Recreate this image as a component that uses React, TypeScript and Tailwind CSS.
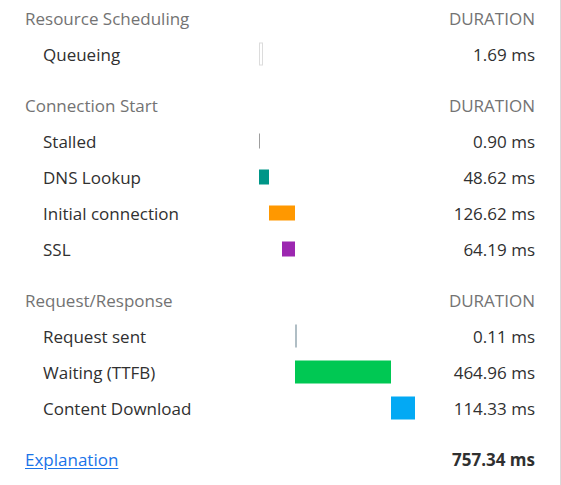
import React from "react";

const TOTAL = 757.34;
const TRACK = 156;

type Bar = {
  start: number;
  dur: number;
  kind: "queue" | "stall" | "sent" | "fill";
  color?: string;
  tall?: boolean;
};

type Row = { label: string; value: string; bar: Bar };
type Section = { title: string; rows: Row[] };

const sections: Section[] = [
  {
    title: "Resource Scheduling",
    rows: [{ label: "Queueing", value: "1.69 ms", bar: { start: 0, dur: 1.69, kind: "queue" } }],
  },
  {
    title: "Connection Start",
    rows: [
      { label: "Stalled", value: "0.90 ms", bar: { start: 1.69, dur: 0.9, kind: "stall" } },
      { label: "DNS Lookup", value: "48.62 ms", bar: { start: 2.59, dur: 48.62, kind: "fill", color: "#009688" } },
      { label: "Initial connection", value: "126.62 ms", bar: { start: 51.21, dur: 126.62, kind: "fill", color: "#ff9800" } },
      { label: "SSL", value: "64.19 ms", bar: { start: 113.64, dur: 64.19, kind: "fill", color: "#9c27b0" } },
    ],
  },
  {
    title: "Request/Response",
    rows: [
      { label: "Request sent", value: "0.11 ms", bar: { start: 177.83, dur: 0.11, kind: "sent" } },
      { label: "Waiting (TTFB)", value: "464.96 ms", bar: { start: 177.94, dur: 464.96, kind: "fill", color: "#00c853", tall: true } },
      { label: "Content Download", value: "114.33 ms", bar: { start: 642.9, dur: 114.33, kind: "fill", color: "#03a9f4", tall: true } },
    ],
  },
];

function px(ms: number) {
  if (ms >= TOTAL - 0.5) return TRACK;
  return Math.floor((ms / TOTAL) * TRACK);
}

function BarView({ bar }: { bar: Bar }) {
  const left = px(bar.start);
  const right = px(bar.start + bar.dur);
  if (bar.kind === "queue") {
    return (
      <div
        className="absolute top-1/2 -translate-y-1/2 h-[23px] w-[4px] border border-[#dcdcdc] bg-white"
        style={{ left }}
      />
    );
  }
  if (bar.kind === "stall") {
    return (
      <div
        className="absolute top-1/2 -translate-y-1/2 h-[15px] w-[1px] bg-[#9e9e9e]"
        style={{ left }}
      />
    );
  }
  if (bar.kind === "sent") {
    return (
      <div
        className="absolute top-1/2 -translate-y-1/2 h-[23px] w-[2px] bg-[#b0bec5]"
        style={{ left }}
      />
    );
  }
  return (
    <div
      className={`absolute top-1/2 -translate-y-1/2 ${bar.tall ? "h-[23px]" : "h-[15px]"}`}
      style={{ left, width: right - left, background: bar.color }}
    />
  );
}

export default function App() {
  return (
    <div
      className="w-[561px] h-[485px] bg-white border-r border-[#dadada] text-[17px] leading-none overflow-hidden"
      style={{ fontFamily: '"Open Sans", "Noto Sans", sans-serif' }}
    >
      <div className="flex flex-col pl-[25px] pr-[25px]">
        {sections.map((s, i) => (
          <div key={s.title} className={`flex flex-col ${i > 0 ? "mt-[15px]" : ""}`}>
            <div className="flex items-center justify-between h-[36px] text-[#737373]">
              <span>{s.title}</span>
              <span>DURATION</span>
            </div>
            {s.rows.map((r) => (
              <div key={r.label} className="flex items-center h-[36px] text-[#303030]">
                <span className="w-[234px] pl-[18px] shrink-0">{r.label}</span>
                <div className="relative w-[156px] h-full shrink-0">
                  <BarView bar={r.bar} />
                </div>
                <span className="flex-1 text-right">{r.value}</span>
              </div>
            ))}
          </div>
        ))}
        <div className="flex items-center justify-between h-[36px] mt-[15px]">
          <a href="#" className="text-[#1a73e8] underline underline-offset-2">
            Explanation
          </a>
          <span className="font-bold text-[#303030]">757.34 ms</span>
        </div>
      </div>
    </div>
  );
}
